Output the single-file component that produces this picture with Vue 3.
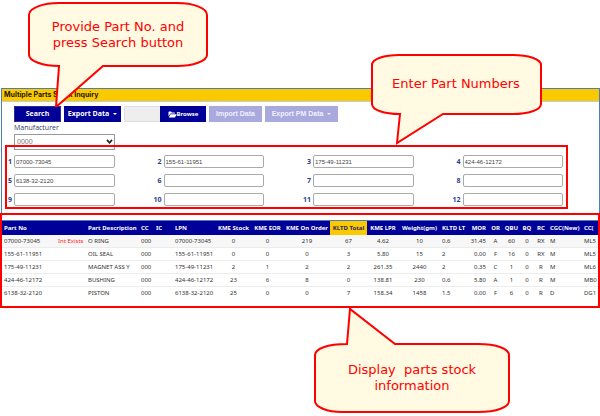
<script setup>
import { ref } from 'vue'

const manufacturer = ref('0000')
const parts = ref(['07000-73045', '155-61-11951', '175-49-11231', '424-46-12172', '6138-32-2120', '', '', '', '', '', '', ''])

const columns = [
  { label: 'Part No', width: 54 },
  { label: '', width: 30, align: 'alert' },
  { label: 'Part Description', width: 53 },
  { label: 'CC', width: 15 },
  { label: 'IC', width: 19 },
  { label: 'LPN', width: 43 },
  { label: 'KME Stock', width: 35, align: 'center' },
  { label: 'KME EOR', width: 33, align: 'center' },
  { label: 'KME On Order', width: 46, align: 'center' },
  { label: 'KLTD Total', width: 37, align: 'center', marked: true },
  { label: 'KME LPR', width: 32, align: 'center' },
  { label: 'Weight(gm)', width: 41, align: 'center' },
  { label: 'KLTD LT', width: 29 },
  { label: 'MOR', width: 19, align: 'right' },
  { label: 'OR', width: 15, align: 'center' },
  { label: 'QBU', width: 17, align: 'center' },
  { label: 'BQ', width: 14, align: 'center' },
  { label: 'RC', width: 14, align: 'center' },
  { label: 'CGC(New)', width: 34 },
  { label: 'CC(', width: 16 }
]
const total = columns.reduce((sum, c) => sum + c.width, 0)

const rows = [
  ['07000-73045', 'Int Exists', 'O RING', '000', '', '07000-73045', '0', '0', '219', '67', '4.62', '10', '0.6', '31.45', 'A', '60', '0', 'RX', 'M', 'ML5'],
  ['155-61-11951', '', 'OIL SEAL', '000', '', '155-61-11951', '0', '0', '0', '3', '5.80', '15', '2', '0.00', 'F', '16', '0', 'RX', 'M', 'ML5'],
  ['175-49-11231', '', 'MAGNET ASS Y', '000', '', '175-49-11231', '2', '1', '2', '2', '261.35', '2440', '2', '0.35', 'C', '1', '0', 'R', 'M', 'ML6'],
  ['424-46-12172', '', 'BUSHING', '000', '', '424-46-12172', '23', '6', '8', '0', '138.81', '230', '0.6', '5.80', 'A', '1', '0', 'R', 'M', 'MB0'],
  ['6138-32-2120', '', 'PISTON', '000', '', '6138-32-2120', '25', '0', '0', '7', '158.34', '1458', '1.5', '0.00', 'F', '6', '0', 'R', 'D', 'DG1']
]
</script>

<template>
  <main class="page">
    <section class="window">
      <h1 class="title">Multiple Parts Stock Inquiry</h1>
      <div class="toolbar">
        <button class="btn search" type="button">Search</button>
        <button class="btn export" type="button">Export Data <span class="caret"></span></button>
        <div class="file">
          <input class="file-name" type="text" aria-label="File name" readonly />
          <button class="btn browse" type="button">
            <svg class="folder" viewBox="0 0 18 14" aria-hidden="true">
              <path d="M1 11V2.5Q1 1 2.500 1H6Q7 1 7.500 2.800H12.500Q14 2.800 14 4.500V5H6Q4.500 5 3.700 6.300Z" />
              <path d="M1.500 13L4.600 7.200Q5 6.300 6 6.300H17.500L14.200 12.300Q13.800 13 13 13Z" />
            </svg>Browse
          </button>
        </div>
        <button class="btn muted import" type="button">Import Data</button>
        <button class="btn muted pm" type="button">Export PM Data <span class="caret"></span></button>
      </div>
      <div class="maker">
        <label for="maker">Manufacturer</label>
        <div class="select-wrap">
          <select id="maker" v-model="manufacturer">
            <option>0000</option>
          </select>
          <svg class="chevron" viewBox="0 0 8 6" aria-hidden="true"><path d="M1 1L4 4.500L7 1" /></svg>
        </div>
      </div>
      <div class="parts">
        <div v-for="(p, i) in parts" :key="i" class="part">
          <label :for="'part' + i">{{ i + 1 }}</label>
          <input :id="'part' + i" v-model="parts[i]" type="text" />
        </div>
      </div>
    </section>

    <section class="results">
      <table>
        <colgroup>
          <col v-for="(c, i) in columns" :key="i" :style="{ width: (c.width / total) * 100 + '%' }" />
        </colgroup>
        <thead>
          <tr>
            <th v-for="(c, i) in columns" :key="i" :class="[c.align, { marked: c.marked }]">{{ c.label }}</th>
          </tr>
        </thead>
        <tbody>
          <tr v-for="r in rows" :key="r[0]">
            <td v-for="(v, i) in r" :key="i" :class="columns[i].align">{{ v }}</td>
          </tr>
        </tbody>
      </table>
    </section>

    <aside class="callout c-search">
      <svg viewBox="0 0 182 107" aria-hidden="true">
        <path d="M2 15C2 8 16 3 32 3H150C166 3 180 8 180 15V55C180 61 166 66 150 66H76L29 107L32 66C16 66 2 61 2 55Z" />
      </svg>
      <p>Provide Part No. and<br />press Search button</p>
    </aside>
    <aside class="callout c-enter">
      <svg viewBox="0 0 172 92" aria-hidden="true">
        <path d="M2 12C2 6 14 2 29 2H143C158 2 171 6 171 12V51C171 57 158 61 143 61H73L27 90L30 61C14 61 2 57 2 51Z" />
      </svg>
      <p>Enter Part Numbers</p>
    </aside>
    <aside class="callout c-stock">
      <svg viewBox="0 0 198 106" aria-hidden="true">
        <path d="M2 48C2 42 14 37 34 37L37 2L82 37H165C184 37 196 42 196 48V94C196 100 184 105 165 105H29C14 105 2 100 2 94Z" />
      </svg>
      <p>Display&nbsp; parts stock<br />information</p>
    </aside>
  </main>
</template>

<style>
body { margin: 0; background: #fff; }
</style>

<style scoped>
* { box-sizing: border-box; }
.page { position: relative; padding: 88px 0 108px; font-family: "Open Sans", sans-serif; font-size: 7px; overflow: hidden; }
.window { margin-left: 1px; padding-bottom: 4px; border: 1px solid #4a7ebb; border-bottom: 0; }
.title { margin: 0; padding-left: 2px; font: bold 7px/12px Inter, sans-serif; color: #1c1800; background: #fbc900; border-bottom: 1px solid #b9cfe8; }
.toolbar { display: flex; gap: 3px; padding: 4px 12px 0; }
.btn { display: flex; align-items: center; justify-content: center; height: 16px; padding: 0; border: 0; background: #000099; color: #fff; font: bold 7px/16px "Open Sans", sans-serif; white-space: nowrap; }
.search { width: 47px; box-shadow: inset 0 0 0 1px #2c2c8c; }
.export { width: 57px; }
.browse { width: 46px; font: bold 6px/16px "Noto Sans", sans-serif; }
.muted { background: #a9a9de; color: #f0f0ff; font: bold 7px/16px "Liberation Sans", sans-serif; }
.import { width: 53px; }
.pm { width: 73px; }
.caret { margin-left: 4px; border: 2px solid transparent; border-top-color: currentColor; border-bottom: 0; }
.file { display: flex; }
.file-name { width: 36px; height: 16px; padding: 0; border: 1px solid #ddd; border-right: 0; border-radius: 2px 0 0 2px; background: #eee; }
.folder { width: 9px; height: 7px; fill: #fff; }
.maker { padding-left: 12px; color: #33375f; }
.maker label { display: block; line-height: 12px; }
.select-wrap { position: relative; width: 101px; }
select { display: block; width: 100%; height: 16px; padding: 0 2px; appearance: none; border: 1px solid #999; border-radius: 0; background: #fff; color: #777; font: 7px/14px "Liberation Sans", sans-serif; }
.chevron { position: absolute; right: 2px; top: 5px; width: 7px; height: 5px; fill: none; stroke: #222; stroke-width: 2; pointer-events: none; }
.parts { position: relative; display: grid; grid-template-columns: repeat(4, 1fr); gap: 6px 42px; margin: -5px 31px 0 3px; padding: 8px 3px 1px 0; border: 2px solid #f00; }
.part { display: flex; align-items: center; justify-content: flex-end; gap: 2px; min-width: 0; }
.part label { color: #2b3f8a; font-weight: bold; line-height: 13px; }
.part input { flex: none; width: calc(100% - 7px); height: 13px; padding: 0 1px; border: 1px solid #aaa; border-radius: 2px; background: #fff; color: #444; font: 6px/11px "Liberation Sans", sans-serif; }
.results { padding: 5px 0 6px; border: 2px solid #f00; }
table { width: 100%; table-layout: fixed; border-collapse: separate; border-spacing: 0; font: 6px/12px "Noto Sans", sans-serif; color: #333; }
th, td { padding: 0 0 0 2px; text-align: left; white-space: nowrap; }
th { height: 15px; background: #000099; color: #fff; font-weight: bold; border-top: 1px solid #4a7ebb; }
td { height: 13px; border-bottom: 1px solid #ececec; }
tbody tr:first-child td { background: #f7f7f7; }
tbody tr:last-child td { border-bottom-color: #fff; }
.center { padding: 0; text-align: center; }
.right { padding: 0 2px 0 0; text-align: right; }
th.marked { background: #fbc900; color: #26266b; }
tbody td.alert { color: #f22; }
.callout { position: absolute; color: #f00; font: 13px/16px "DejaVu Sans", Verdana, sans-serif; text-align: center; }
.callout svg { display: block; width: 100%; fill: #fffae1; stroke: #f00; stroke-width: 2; }
.callout p { position: absolute; left: 0; right: 0; margin: 0; white-space: nowrap; }
.c-search { left: 27px; top: 0; width: 182px; }
.c-search p { top: 19px; }
.c-enter { left: 370px; top: 53px; width: 172px; }
.c-enter p { top: 23px; }
.c-stock { left: 313px; top: 307px; width: 198px; }
.c-stock p { top: 55px; }
</style>
